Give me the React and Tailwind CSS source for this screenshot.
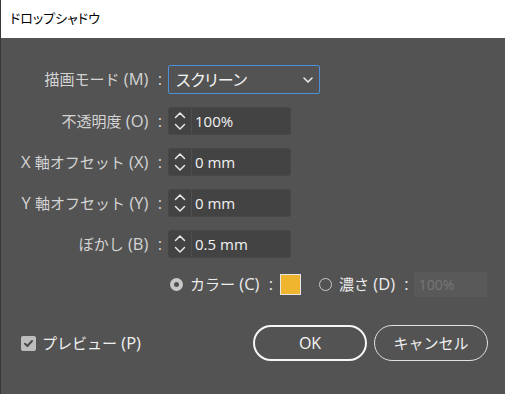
import React from "react";

const F = { fontFamily: '"Open Sans", "Noto Sans CJK JP", sans-serif' };

function Spinner() {
  return (
    <svg width="14" height="22" viewBox="0 0 14 22" fill="none" stroke="#e8e8e8" strokeWidth="1.5" strokeLinecap="round" strokeLinejoin="round">
      <path d="M2.5 7.5 L7 3 L11.5 7.5" />
      <path d="M2.5 14.5 L7 19 L11.5 14.5" />
    </svg>
  );
}

function NumField({ value }) {
  return (
    <div className="flex h-[28px] w-[123px] items-stretch rounded-[3px] border border-[#474747] bg-[#434343]">
      <div className="flex w-[23px] items-center justify-center border-r border-[#4f4f4f]">
        <Spinner />
      </div>
      <div className="flex items-center pl-[3px] text-[15px] text-[#f2f2f2]">{value}</div>
    </div>
  );
}

function L({ children }) {
  return <span className="text-[16.5px]">{children}</span>;
}

function C() {
  return <span className="ml-[5px] text-[16.5px]">:</span>;
}

function Row({ label, children }) {
  return (
    <div className="flex items-center">
      <div className="w-[161px] text-right text-[15px] text-[#d4d4d4] whitespace-nowrap">{label}</div>
      <div className="ml-[6px]">{children}</div>
    </div>
  );
}

export default function App() {
  return (
    <div className="flex h-[394px] w-[505px] overflow-hidden" style={F}>
      <div className="w-[1px] bg-[#3b3833]" />
      <div className="flex flex-1 flex-col">
        <div className="flex h-[38px] items-center bg-white pl-[9px] text-[13px] text-black [font-feature-settings:'palt']">
          ドロップシャドウ
        </div>
        <div className="flex flex-1 flex-col bg-[#535353]">
          <div className="mt-[27px] flex flex-col gap-[13px]">
            <Row label={<>描画モード<L> (M) </L><C /></>}>
              <div className="flex h-[29px] w-[152px] items-center justify-between rounded-[2px] border-[1.5px] border-[#4d8fd8] pl-[7px] pr-[5px] text-[16px] text-[#f4f4f4] [font-feature-settings:'palt']">
                <span>スクリーン</span>
                <svg width="12" height="8" viewBox="0 0 12 8" fill="none" stroke="#e8e8e8" strokeWidth="1.6" strokeLinecap="round" strokeLinejoin="round">
                  <path d="M2 2 L6 6 L10 2" />
                </svg>
              </div>
            </Row>
            <Row label={<>不透明度<L> (O) </L><C /></>}><NumField value="100%" /></Row>
            <Row label={<><L>X </L>軸オフセット<L> (X) </L><C /></>}><NumField value="0 mm" /></Row>
            <Row label={<><L>Y </L>軸オフセット<L> (Y) </L><C /></>}><NumField value="0 mm" /></Row>
            <Row label={<>ぼかし<L> (B) </L><C /></>}><NumField value="0.5 mm" /></Row>
          </div>
          <div className="mt-[14px] flex h-[25px] items-center pl-[169px] text-[15px] text-[#ececec]">
            <div className="flex h-[13px] w-[13px] items-center justify-center rounded-full bg-[#c8c8c8]">
              <div className="h-[5px] w-[5px] rounded-full bg-[#535353]" />
            </div>
            <span className="ml-[7px] whitespace-nowrap">カラー<L> (C) </L><C /></span>
            <div className="ml-[7px] h-[21px] w-[21px] border border-[#e6e6e6] bg-[#f0b52e]" />
            <div className="ml-[18px] h-[13px] w-[13px] rounded-full border-[1.5px] border-[#c8c8c8]" />
            <span className="ml-[7px] whitespace-nowrap">濃さ<L> (D) </L><C /></span>
            <div className="ml-[5px] flex h-[25px] w-[73px] items-center bg-[#595959] pl-[5px] text-[14px] text-[#777777]">100%</div>
          </div>
          <div className="mt-[28px] flex items-center">
            <div className="ml-[20px] flex h-[15px] w-[15px] items-center justify-center rounded-[2px] bg-[#bdbdbd]">
              <svg width="11" height="11" viewBox="0 0 11 11" fill="none" stroke="#4a4a4a" strokeWidth="2" strokeLinecap="round" strokeLinejoin="round">
                <path d="M2 5.8 L4.4 8 L9 3" />
              </svg>
            </div>
            <span className="ml-[6px] whitespace-nowrap text-[15px] text-[#f0f0f0]">プレビュー<L> (P)</L></span>
            <div className="ml-auto mr-[17px] flex gap-[7px]">
              <div className="flex h-[36px] w-[114px] items-center justify-center rounded-full border-2 border-[#f6f6f6] text-[16px] font-medium text-[#f6f6f6]">OK</div>
              <div className="flex h-[36px] w-[114px] items-center justify-center rounded-full border-[1.5px] border-[#e2e2e2] text-[15px] text-[#f0f0f0]">キャンセル</div>
            </div>
          </div>
        </div>
      </div>
    </div>
  );
}
